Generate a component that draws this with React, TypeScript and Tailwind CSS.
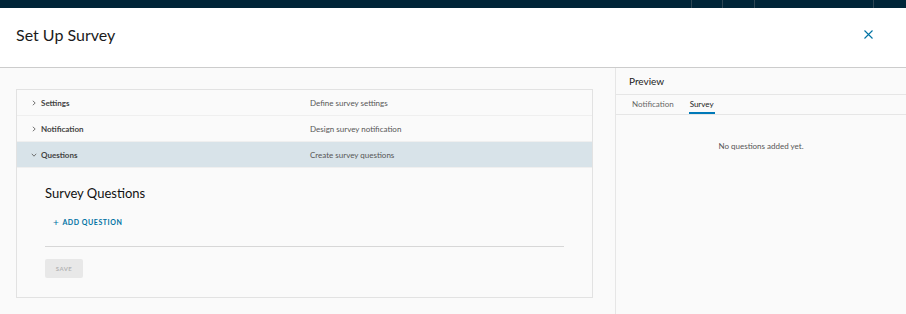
import { useState } from "react";

type Step = {
  title: string;
  description: string;
};

const steps: Step[] = [
  { title: "Settings", description: "Define survey settings" },
  { title: "Notification", description: "Design survey notification" },
  { title: "Questions", description: "Create survey questions" },
];

function Chevron({ open }: { open: boolean }) {
  return (
    <svg width="6" height="6" viewBox="0 0 6 6" className="shrink-0" fill="none" stroke="#666" strokeWidth="0.9">
      {open ? <path d="M0.8 1.8 L3 4.2 L5.2 1.8" /> : <path d="M1.8 0.8 L4.2 3 L1.8 5.2" />}
    </svg>
  );
}

export default function App() {
  const [openStep, setOpenStep] = useState(2);
  const [tab, setTab] = useState("Survey");

  return (
    <div className="flex h-[314px] w-[906px] flex-col overflow-hidden bg-[#fafafa] font-['Lato',sans-serif] text-[#313131]">
      <div className="flex h-[8px] shrink-0 items-stretch justify-end bg-[#002538]">
        <div className="mr-[30px] w-[1px] bg-[#2d4654]" />
        <div className="mr-[31px] w-[1px] bg-[#2d4654]" />
        <div className="mr-[118px] w-[1px] bg-[#2d4654]" />
        <div className="mr-[32px] w-[1px] bg-[#2d4654]" />
      </div>

      <div className="flex h-[60px] shrink-0 items-center justify-between border-b border-[#cccccc] bg-white pb-[6px] pl-[16px] pr-[33px]">
        <h1 className="text-[16px] font-normal text-[#1b1b1b]">Set Up Survey</h1>
        <button className="text-[#0072a3]">
          <svg width="9" height="9" viewBox="0 0 9 9" stroke="currentColor" strokeWidth="1.1">
            <path d="M0.5 0.5 L8.5 8.5 M8.5 0.5 L0.5 8.5" />
          </svg>
        </button>
      </div>

      <div className="flex flex-1">
        <div className="w-[616px] shrink-0 border-r border-[#e6e6e6] pl-[16px] pr-[22px] pt-[21px]">
          <div className="border border-[#e2e2e2] bg-[#fafafa]">
            {steps.map((step, i) => (
              <div key={step.title}>
                <button
                  onClick={() => setOpenStep(i)}
                  className={`flex h-[26px] w-full items-center border-b border-[#efefef] text-left text-[8px] ${
                    openStep === i ? "bg-[#d8e3e9]" : ""
                  }`}
                >
                  <div className="flex w-[293px] items-center gap-[4px] pl-[14px] font-bold text-[#444]">
                    <Chevron open={openStep === i} />
                    {step.title}
                  </div>
                  <div className="text-[#565656]">{step.description}</div>
                </button>
              </div>
            ))}
            <div className="px-[28px] pb-[19px] pt-[16px]">
              <h2 className="text-[13px] text-[#111]">Survey Questions</h2>
              <button className="mt-[13px] flex items-center gap-[3px] pl-[8px] text-[7px] font-bold tracking-[0.08em] text-[#0072a3]">
                <span className="text-[10px] font-normal leading-none">+</span>
                ADD QUESTION
              </button>
              <div className="mt-[19px] w-[519px] border-t border-[#d7d7d7]" />
              <button className="mt-[12px] h-[19px] w-[38px] rounded-[2px] bg-[#e8e8e8] text-[6px] font-bold tracking-[0.08em] text-[#b5b5b5]">
                SAVE
              </button>
            </div>
          </div>
        </div>

        <div className="flex flex-1 flex-col">
          <div className="flex h-[27px] items-center border-b border-[#e6e6e6] pl-[13px] text-[10px] text-[#222]">
            Preview
          </div>
          <div className="flex h-[20px] items-end gap-[14px] border-b border-[#e6e6e6] pl-[15px] text-[8px]">
            {["Notification", "Survey"].map((t) => (
              <button
                key={t}
                onClick={() => setTab(t)}
                className={`px-[1px] pb-[2px] ${
                  tab === t ? "border-b-2 border-[#0079b8] text-[#222]" : "border-b-2 border-transparent text-[#666]"
                }`}
              >
                {t}
              </button>
            ))}
          </div>
          <p className="mt-[25px] text-center text-[8px] text-[#565656]">No questions added yet.</p>
        </div>
      </div>
    </div>
  );
}
